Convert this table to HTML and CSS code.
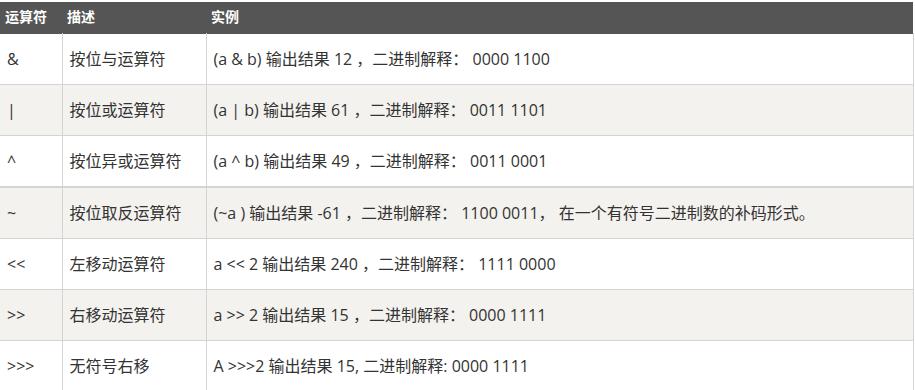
FILE: index.html
```html
<!DOCTYPE html>
<html lang="zh-CN">
<head>
<meta charset="utf-8">
<link rel="stylesheet" href="styles.css">
</head>
<body>
<table class="reference">
  <colgroup>
    <col class="c1"><col class="c2"><col class="c3">
  </colgroup>
  <thead>
    <tr><th>运算符</th><th>描述</th><th>实例</th></tr>
  </thead>
  <tbody>
    <tr><td>&amp;</td><td>按位与运算符</td><td>(a &amp; b) 输出结果 12 ，二进制解释： 0000 1100</td></tr>
    <tr class="alt"><td>|</td><td>按位或运算符</td><td>(a | b) 输出结果 61 ，二进制解释： 0011 1101</td></tr>
    <tr class="sep"><td>^</td><td>按位异或运算符</td><td>(a ^ b) 输出结果 49 ，二进制解释： 0011 0001</td></tr>
    <tr class="alt"><td>~</td><td>按位取反运算符</td><td>(~a ) 输出结果 -61 ，二进制解释： 1100 0011， 在一个有符号二进制数的补码形式。</td></tr>
    <tr><td>&lt;&lt;</td><td>左移动运算符</td><td>a &lt;&lt; 2 输出结果 240 ，二进制解释： 1111 0000</td></tr>
    <tr class="alt"><td>&gt;&gt;</td><td>右移动运算符</td><td>a &gt;&gt; 2 输出结果 15 ，二进制解释： 0000 1111</td></tr>
    <tr><td>&gt;&gt;&gt;</td><td>无符号右移</td><td>A &gt;&gt;&gt;2 输出结果 15, 二进制解释: 0000 1111</td></tr>
  </tbody>
</table>
</body>
</html>
```
FILE: styles.css
```css
html, body {
  margin: 0;
  padding: 0;
  background: #fff;
}
body {
  padding-top: 2px;
  font-family: "Open Sans", "Noto Sans CJK SC", sans-serif;
  color: #333;
}
.reference {
  border-collapse: collapse;
  width: 913px;
  table-layout: fixed;
}
.c1 { width: 62px; }
.c2 { width: 144px; }
.c3 { width: 707px; }
.reference th {
  background: #555;
  color: #fff;
  font-weight: bold;
  font-size: 14px;
  text-align: left;
  height: 31px;
  padding: 0 5px;
  box-sizing: border-box;
  line-height: 20px;
  vertical-align: middle;
}
.reference td {
  font-size: 16px;
  height: 50px;
  padding: 0 7px;
  border: 1px solid #d4d4d4;
  vertical-align: middle;
  line-height: 20px;
  white-space: nowrap;
}
.reference td:first-child {
  border-left: none;
}
.reference tbody tr:first-child td {
  border-top: 1px solid #555;
}
.reference tr.alt td {
  background: #f3f2ee;
}
.reference tr.sep td {
  border-bottom: 2px solid #d4d4d4;
}
```
